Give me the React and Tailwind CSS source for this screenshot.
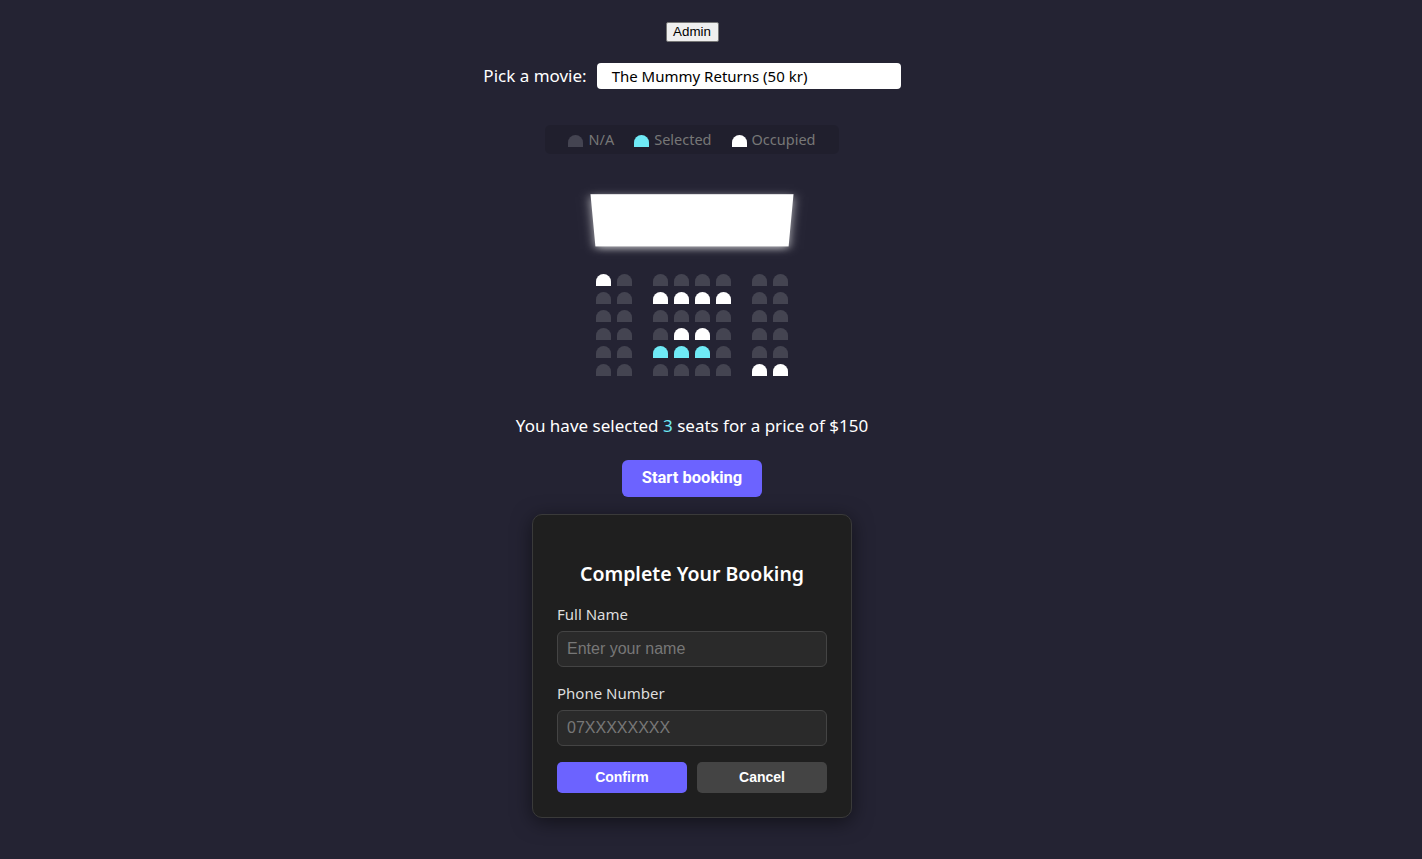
import React from 'react';

// seat states: 0 = n/a, 1 = selected, 2 = occupied
const ROWS = [
  [2, 0, 0, 0, 0, 0, 0, 0],
  [0, 0, 2, 2, 2, 2, 0, 0],
  [0, 0, 0, 0, 0, 0, 0, 0],
  [0, 0, 0, 2, 2, 0, 0, 0],
  [0, 0, 1, 1, 1, 0, 0, 0],
  [0, 0, 0, 0, 0, 0, 2, 2],
];

const SEAT_BG = ['bg-[#444451]', 'bg-[#6feaf6]', 'bg-white'];

const Seat = ({ state, className = '' }) => (
  <div className={`h-[12px] w-[15px] rounded-t-[10px] ${SEAT_BG[state]} ${className}`} />
);

const App = () => {
  return (
    <div
      className="min-h-screen w-full bg-[#242333] text-white pr-[38px] flex flex-col items-center"
      style={{ fontFamily: '"Noto Sans", "Open Sans", sans-serif' }}
    >
      {/* Admin */}
      <button
        className="mt-[22px] h-[20px] w-[53px] rounded-[2px] border border-[#767676] bg-[#efefef] text-[13.33px] leading-none text-black"
        style={{ fontFamily: '"Liberation Sans", Arial, sans-serif' }}
      >
        Admin
      </button>

      {/* Movie picker */}
      <div className="mt-[21px] flex items-center">
        <span className="text-[17px]">Pick a movie:</span>
        <div className="ml-[10px] flex h-[26px] w-[304px] items-center rounded-[4px] bg-white px-[15px] text-[15px] text-black">
          The Mummy Returns (50 kr)
        </div>
      </div>

      {/* Legend */}
      <div className="mt-[36px] flex h-[29px] items-center rounded-[5px] bg-black/10 px-[13px] text-[14.5px] text-[#777]">
        <div className="mx-[10px] flex items-center gap-[5px]">
          <Seat state={0} className="mt-[2px]" />
          <span>N/A</span>
        </div>
        <div className="mx-[10px] flex items-center gap-[5px]">
          <Seat state={1} className="mt-[2px]" />
          <span>Selected</span>
        </div>
        <div className="mx-[10px] flex items-center gap-[5px]">
          <Seat state={2} className="mt-[2px]" />
          <span>Occupied</span>
        </div>
      </div>

      {/* Screen + seats */}
      <div className="mt-[17px] [perspective:1000px]">
        <div className="my-[15px] h-[70px] w-full bg-white shadow-[0_3px_10px_rgba(255,255,255,0.7)] [transform:rotateX(-45deg)]" />
        {ROWS.map((row, r) => (
          <div key={r} className="flex">
            {row.map((s, c) => (
              <Seat
                key={c}
                state={s}
                className={`m-[3px] ${c === 1 ? 'mr-[18px]' : ''} ${c === 6 ? 'ml-[18px]' : ''}`}
              />
            ))}
          </div>
        ))}
      </div>

      {/* Summary */}
      <p className="mt-[35px] text-[17px] leading-[24px]">
        You have selected <span className="text-[#6feaf6]">3</span> seats for a price of $150
      </p>

      <button
        className="mt-[22px] h-[37px] w-[140px] rounded-[6px] bg-[#6c63ff] text-[16.5px] font-bold text-white"
        style={{ fontFamily: 'Roboto, "Liberation Sans", sans-serif' }}
      >
        Start booking
      </button>

      {/* Booking card */}
      <div className="mt-[17px] mb-[41px] w-[320px] rounded-[10px] border border-[#3a3a3a] bg-[#1f1f1f] px-[24px] pt-[44px] pb-[24px] shadow-[0_4px_20px_rgba(0,0,0,0.5)]">
        <h2 className="text-center text-[19.5px] font-semibold leading-[30px]">Complete Your Booking</h2>

        <label className="mt-[14px] block text-[15px] leading-[22px] text-[#ddd]">Full Name</label>
        <div
          className="mt-[6px] flex h-[36px] items-center rounded-[6px] border border-[#444] bg-[#2a2a2a] px-[9px] text-[16px] text-[#777]"
          style={{ fontFamily: '"Liberation Sans", Arial, sans-serif' }}
        >
          Enter your name
        </div>

        <label className="mt-[15px] block text-[15px] leading-[22px] text-[#ddd]">Phone Number</label>
        <div
          className="mt-[6px] flex h-[36px] items-center rounded-[6px] border border-[#444] bg-[#2a2a2a] px-[9px] text-[16px] text-[#777]"
          style={{ fontFamily: '"Liberation Sans", Arial, sans-serif' }}
        >
          07XXXXXXXX
        </div>

        <div
          className="mt-[16px] flex gap-[10px] text-[14px] font-bold"
          style={{ fontFamily: '"Liberation Sans", Arial, sans-serif' }}
        >
          <button className="h-[31px] flex-1 rounded-[5px] bg-[#6c63ff] text-white">Confirm</button>
          <button className="h-[31px] flex-1 rounded-[5px] bg-[#444] text-white">Cancel</button>
        </div>
      </div>
    </div>
  );
};

export default App;
